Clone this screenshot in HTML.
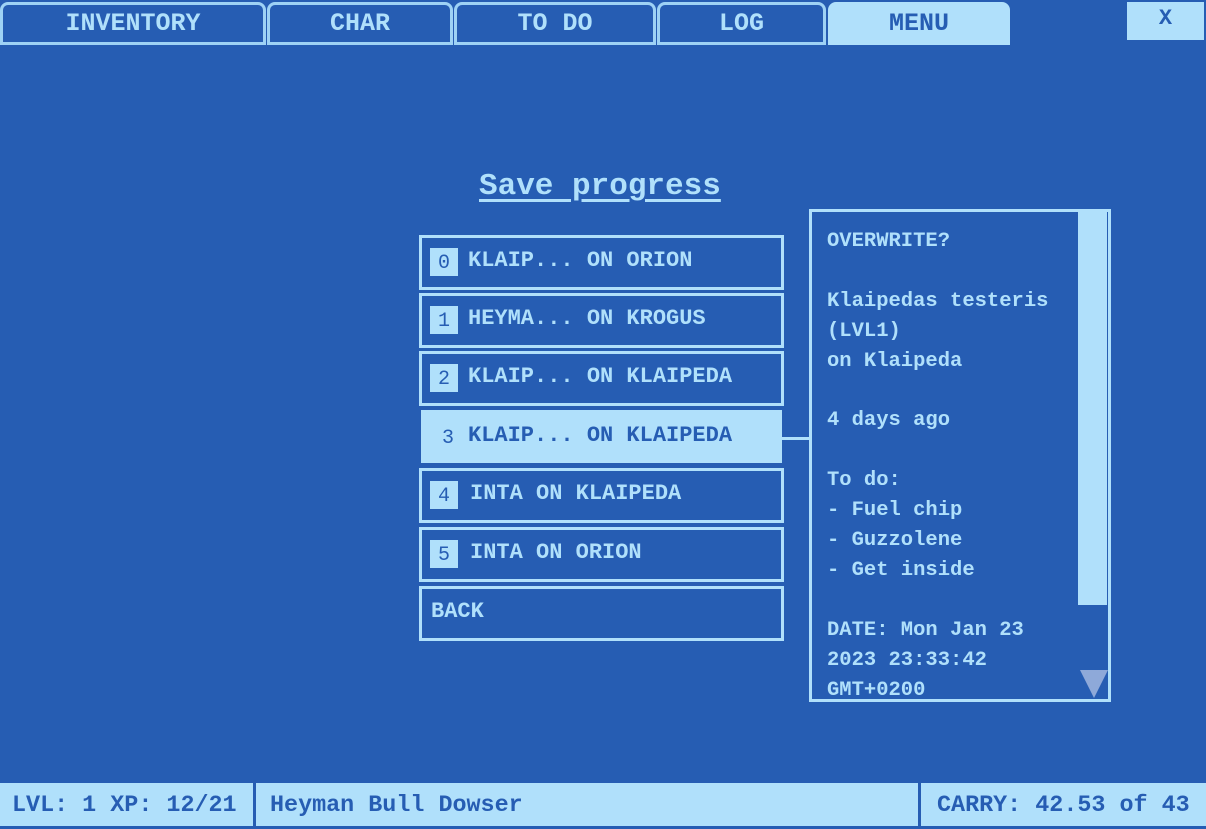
<!DOCTYPE html>
<html><head><style>
body{margin:0;width:1206px;height:826px;background:#265db3;position:relative;overflow:hidden;font-family:"Liberation Mono",monospace;font-weight:bold;color:#b0e0fb}
.a{position:absolute;box-sizing:border-box}
.tab{border:3px solid #9ed2f5;border-bottom-width:3px;border-radius:8px 8px 0 0;top:2px;height:43px;font-size:25px;text-align:center;line-height:38px}
.btn{border:3px solid #b0e0fb;left:419px;width:365px;height:55px;font-size:22px;line-height:46px;padding-left:46px}
.num{position:absolute;left:8px;top:10px;width:28px;height:28px;background:#b0e0fb;color:#265db3;line-height:32px;text-align:center;font-size:20px;font-weight:normal}
.info{font-size:20.5px;line-height:29.9px}
</style></head><body>
<div class="a tab" style="left:0;width:266px">INVENTORY</div>
<div class="a tab" style="left:267px;width:186px">CHAR</div>
<div class="a tab" style="left:454px;width:202px">TO DO</div>
<div class="a tab" style="left:657px;width:169px">LOG</div>
<div class="a tab" style="left:828px;width:182px;background:#b0e0fb;color:#265db3;border-color:#b0e0fb">MENU</div>
<div class="a" style="left:1127px;top:2px;width:77px;height:38px;background:#b0e0fb;color:#265db3;font-size:22px;text-align:center;line-height:34px">X</div>

<div class="a" style="left:479px;top:169px;font-size:31px;text-decoration:underline;text-underline-offset:5px">Save progress</div>

<div class="a btn" style="top:235px"><span class="num">0</span>KLAIP... ON ORION</div>
<div class="a btn" style="top:293px"><span class="num">1</span>HEYMA... ON KROGUS</div>
<div class="a btn" style="top:351px"><span class="num">2</span>KLAIP... ON KLAIPEDA</div>
<div class="a btn" style="top:410px;left:421px;width:361px;height:53px;background:#b0e0fb;color:#265db3;border-color:#b0e0fb;padding-left:44px"><span class="num" style="background:none;color:#265db3;left:10px">3</span>KLAIP... ON KLAIPEDA</div>
<div class="a btn" style="top:468px;padding-left:48px"><span class="num">4</span>INTA ON KLAIPEDA</div>
<div class="a btn" style="top:527px;padding-left:48px"><span class="num">5</span>INTA ON ORION</div>
<div class="a btn" style="top:586px;padding-left:9px">BACK</div>

<div class="a" style="left:782px;top:437px;width:28px;height:3px;background:#b0e0fb"></div>
<div class="a" style="left:809px;top:209px;width:302px;height:493px;border:3px solid #b0e0fb;overflow:hidden">
<div class="a" style="left:266px;top:0;width:29px;height:393px;background:#b0e0fb"></div>
<svg class="a" style="left:268px;top:458px" width="28" height="28"><polygon points="0,0 28,0 14,28" fill="#8ea9d9"/></svg>
<div class="a info" style="left:15px;top:15px;white-space:pre">OVERWRITE?

Klaipedas testeris
(LVL1)
on Klaipeda

4 days ago

To do:
- Fuel chip
- Guzzolene
- Get inside

DATE: Mon Jan 23
2023 23:33:42
GMT+0200</div>
</div>

<div class="a" style="left:0;top:783px;width:1206px;height:43px;background:#b0e0fb;color:#265db3;font-size:23.4px;line-height:46px">
<span class="a" style="left:12px">LVL: 1 XP: 12/21</span>
<div class="a" style="left:253px;top:0;width:3px;height:43px;background:#265db3"></div>
<span class="a" style="left:270px">Heyman Bull Dowser</span>
<div class="a" style="left:918px;top:0;width:3px;height:43px;background:#265db3"></div>
<span class="a" style="left:937px">CARRY: 42.53 of 43</span>
</div>
</body></html>
